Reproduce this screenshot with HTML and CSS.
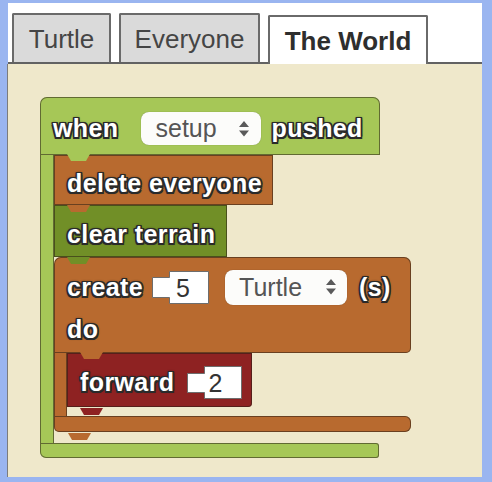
FILE: index.html
```html
<!DOCTYPE html>
<html>
<head>
<meta charset="utf-8">
<link rel="stylesheet" href="styles.css">
</head>
<body>
<div class="frame">
  <div class="tabbar">
    <div class="tab tab-turtle">Turtle</div>
    <div class="tab tab-everyone">Everyone</div>
    <div class="tab tab-world active">The World</div>
  </div>
  <div class="workspace">
    <div class="cblock c-when">
      <div class="head when-head green">
        <span class="lbl">when</span>
        <div class="dd dd-setup">
          <span>setup</span>
          <svg width="10" height="16" viewBox="0 0 10 16"><path d="M5 0L10 6H0Z M0 9.5H10L5 15.5Z" fill="#5a5a5a"/></svg>
        </div>
        <span class="lbl lbl-pushed">pushed</span>
      </div>
      <div class="mid">
        <div class="arm green arm-green"></div>
        <div class="stack stack-green">
          <div class="stmt orange s-delete"><span class="lbl">delete everyone</span></div>
          <div class="stmt dkgreen s-clear"><span class="lbl">clear terrain</span></div>
          <div class="cblock c-create">
            <div class="head create-head orange">
              <div class="line">
                <span class="lbl">create</span>
                <div class="num num-5">
                  <svg width="57" height="33" viewBox="0 0 57 33"><path d="M17.5 0.5H56.5V32.5H17.5V26.5H0.5V6.5H17.5Z" fill="#fff" stroke="#6d6d6d"/></svg>
                  <span>5</span>
                </div>
                <div class="dd dd-turtle">
                  <span>Turtle</span>
                  <svg width="10" height="16" viewBox="0 0 10 16"><path d="M5 0L10 6H0Z M0 9.5H10L5 15.5Z" fill="#5a5a5a"/></svg>
                </div>
                <span class="lbl lbl-s">(s)</span>
              </div>
              <div class="line line-do">
                <span class="lbl">do</span>
              </div>
            </div>
            <div class="mid">
              <div class="arm orange arm-orange"></div>
              <div class="stack stack-orange">
                <div class="stmt red s-forward">
                  <span class="lbl">forward</span>
                  <div class="num num-2">
                    <svg width="55" height="33" viewBox="0 0 55 33"><path d="M17.5 0.5H54.5V32.5H17.5V26.5H0.5V7.5H17.5Z" fill="#fff" stroke="#6d6d6d"/></svg>
                    <span>2</span>
                  </div>
                </div>
              </div>
            </div>
            <div class="foot orange foot-orange"></div>
          </div>
        </div>
      </div>
      <div class="foot green foot-green"></div>
    </div>
  </div>
</div>
</body>
</html>
```

FILE: styles.css
```css
html, body {
  margin: 0;
  padding: 0;
}
body {
  background: #9ab5f0;
  font-family: "Liberation Sans", Arial, sans-serif;
  height: 482px;
  overflow: hidden;
}
.frame {
  margin: 3px 10px 0 7px;
  width: 475px;
}
.tabbar {
  margin-left: 1px;
  height: 59px;
  background: #fff;
  border-bottom: 2px solid #626262;
  display: flex;
  align-items: flex-end;
  padding-left: 4px;
  gap: 8px;
}
.tab {
  box-sizing: border-box;
  height: 49px;
  border: 2px solid #6a6a6a;
  border-bottom: 0;
  border-radius: 2px 2px 0 0;
  background: #dadada;
  color: #454545;
  font-size: 26px;
  display: flex;
  align-items: center;
  justify-content: center;
  padding-top: 2px;
}
.tab-turtle { width: 99px; }
.tab-everyone { width: 141px; }
.tab-world { width: 160px; }
.tab.active {
  background: #fff;
  color: #2e2e2e;
  font-weight: bold;
  margin-bottom: -2px;
  position: relative;
}
.workspace {
  box-sizing: border-box;
  border-left: 1px solid #7c7c7c;
  height: 413px;
  background: #efe8cb;
  padding: 33px 0 0 32px;
}

/* colours */
.green { background: #a6c757; }
.dkgreen { background: #718f27; }
.orange { background: #b86a2f; }
.red { background: #8e2222; }

/* block structure */
.cblock {
  position: relative;
  display: flex;
  flex-direction: column;
  align-items: flex-start;
}
.head, .stmt, .foot {
  position: relative;
  box-sizing: border-box;
  box-shadow: inset 0 0 0 1px rgba(40, 30, 20, 0.55);
}
.head {
  border-radius: 7px 7px 0 0;
  padding-left: 13px;
}
.mid {
  display: flex;
}
.arm {
  box-shadow: inset 1px 0 0 rgba(40, 30, 20, 0.55), inset -1px 0 0 rgba(40, 30, 20, 0.55);
}
.arm-green { width: 14px; }
.arm-orange { width: 13px; }
.stack {
  display: flex;
  flex-direction: column;
  align-items: flex-start;
}
.stack-green { padding-bottom: 11px; }
.stack-orange { padding-bottom: 9px; }
.foot {
  height: 15px;
}
.foot-green {
  width: 339px;
  border-radius: 0 3px 3px 6px;
}
.foot-orange {
  width: 357px;
  height: 16px;
  border-radius: 0 6px 6px 5px;
}

/* connector tabs */
.stmt::after, .head::after, .foot-orange::after {
  content: "";
  position: absolute;
  z-index: 2;
  width: 23px;
  height: 7px;
  bottom: -7px;
  left: 13px;
  background: inherit;
  clip-path: polygon(0 0, 100% 0, calc(100% - 4px) 100%, 4px 100%);
}
.when-head::after { left: 27px; bottom: -6px; }
.create-head::after { left: 26px; bottom: -6px; }
.foot-orange::after { left: 14px; bottom: -8px; }
.s-forward::after { bottom: -8px; }

/* rows */
.when-head {
  width: 340px;
  height: 58px;
  display: flex;
  align-items: center;
  padding-top: 5px;
}
.stmt {
  display: flex;
  align-items: center;
  padding-left: 13px;
}
.s-delete {
  width: 219px;
  height: 50px;
  padding-top: 6px;
}
.s-clear {
  width: 173px;
  height: 52px;
  padding-top: 6px;
}
.create-head {
  width: 357px;
  height: 96px;
  padding-top: 12px;
  border-radius: 7px 7px 5px 0;
}
.line {
  display: flex;
  align-items: center;
  height: 36px;
}
.line-do {
  margin-top: 6px;
}
.s-forward {
  width: 185px;
  height: 54px;
  padding-top: 4px;
  border-radius: 0 0 4px 0;
}

/* labels */
.lbl {
  color: #fff;
  font-weight: bold;
  font-size: 25px;
  line-height: 1;
  letter-spacing: 0.4px;
  white-space: nowrap;
  text-shadow:
    -1.5px -1.5px 0 #2a2a2a, 1.5px -1.5px 0 #2a2a2a,
    -1.5px 1.5px 0 #2a2a2a, 1.5px 1.5px 0 #2a2a2a,
    0 -1.5px 0 #2a2a2a, 0 1.5px 0 #2a2a2a,
    -1.5px 0 0 #2a2a2a, 1.5px 0 0 #2a2a2a,
    0 0 3px #000;
}
.lbl-pushed { margin-left: 11px; }
.lbl-s { margin-left: 12px; }

/* dropdowns */
.dd {
  box-sizing: border-box;
  height: 33px;
  background: #fcfcfa;
  border-radius: 8px;
  display: flex;
  align-items: center;
  justify-content: space-between;
  color: #555;
  font-size: 25px;
  box-shadow: 0 0 1px rgba(0, 0, 0, 0.4);
}
.dd-setup {
  width: 120px;
  margin-left: 22px;
  padding: 0 12px 0 15px;
}
.dd-turtle {
  width: 122px;
  height: 35px;
  margin-left: 16px;
  padding: 0 11px 0 14px;
}
.dd svg {
  display: block;
}

/* number fields */
.num {
  position: relative;
  width: 57px;
  height: 33px;
}
.num svg {
  position: absolute;
  left: 0;
  top: 0;
}
.num span {
  position: relative;
  display: block;
  padding-left: 24px;
  font-size: 25px;
  line-height: 35px;
  color: #333;
}
.num-5 { margin-left: 9px; }
.num-2 {
  width: 55px;
  margin-left: 13px;
}
.num-2 span { padding-left: 21px; }
```
